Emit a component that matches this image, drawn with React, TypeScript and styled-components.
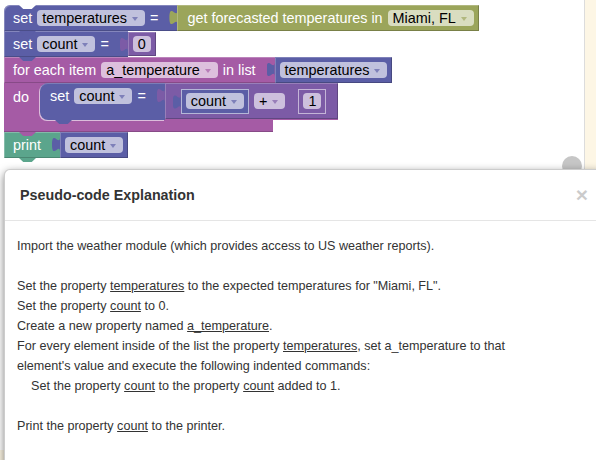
import * as React from "react";
import styled, { createGlobalStyle, css } from "styled-components";

const VAR = "#5b5ea6";
const WEATHER = "#9ba55b";
const LOOP = "#a55ba5";
const MATH = "#7c5ba6";
const PRINT = "#5ba58c";

const FONT = `"Liberation Sans", Arial, sans-serif`;

const GlobalStyle = createGlobalStyle`
  html, body {
    margin: 0;
    padding: 0;
    overflow: hidden;
  }
  body {
    background: #fdf6e5;
    font-family: ${FONT};
  }
`;

const Page = styled.div`
  position: relative;
  width: 596px;
  height: 460px;
  overflow: hidden;
`;

const Workspace = styled.div`
  position: relative;
  box-sizing: border-box;
  width: 585px;
  height: 450px;
  padding: 5px 0 0 4px;
  background: #fff;
  border-right: 1px solid #dcdcdc;
`;

const ScrollKnob = styled.div`
  position: absolute;
  left: 562px;
  top: 156px;
  width: 20px;
  height: 20px;
  border-radius: 50%;
  background: #c6c6c6;
`;

const Stack = styled.div`
  display: flex;
  flex-direction: column;
  align-items: flex-start;
`;

const notch = css`
  clip-path: polygon(0 0, 100% 0, 75% 100%, 25% 100%);
`;

const Statement = styled.div<{ $color: string; $first?: boolean; $minH?: number; $column?: boolean }>`
  position: relative;
  display: flex;
  flex-direction: ${(p) => (p.$column ? "column" : "row")};
  align-items: flex-start;
  min-height: ${(p) => p.$minH ?? 26}px;

  &::after {
    content: "";
    position: absolute;
    left: 15px;
    bottom: -4px;
    width: 17px;
    height: 4px;
    background: ${(p) => p.$color};
    ${notch}
    z-index: 2;
  }

  ${(p) =>
    p.$first &&
    css`
      &::before {
        content: "";
        position: absolute;
        left: 15px;
        top: 0;
        width: 17px;
        height: 4px;
        background: #fff;
        ${notch}
        z-index: 2;
      }
    `}
`;

const Head = styled.div<{ $color: string; $round?: boolean; $inner?: boolean }>`
  box-sizing: border-box;
  align-self: stretch;
  display: flex;
  align-items: flex-start;
  gap: 5px;
  padding: 5px 19px 5px ${(p) => (p.$inner ? 10 : 9)}px;
  background: ${(p) => p.$color};
  box-shadow: inset 1px 1px 0 rgba(255, 255, 255, 0.25), inset 0 -1px 0 rgba(0, 0, 0, 0.18);
  border-top-left-radius: ${(p) => (p.$round ? 6 : 0)}px;

  ${(p) =>
    p.$inner &&
    css`
      border-radius: 8px 0 0 8px;
      box-shadow: -1px 1px 0 rgba(255, 255, 255, 0.6), inset 0 1px 0 rgba(255, 255, 255, 0.2);
    `}
`;

const Label = styled.span`
  color: #fff;
  font-size: 14.4px;
  line-height: 16px;
  white-space: nowrap;
`;

const Field = styled.span`
  display: inline-flex;
  align-items: center;
  gap: 5px;
  box-sizing: border-box;
  height: 16px;
  padding: 0 7px 0 5px;
  border-radius: 4px;
  background: rgba(255, 255, 255, 0.62);
  color: #000;
  font-size: 14.4px;
  line-height: 16px;
  white-space: nowrap;
`;

const NumField = styled(Field)`
  width: 18px;
  padding: 0;
  justify-content: center;
`;

const Arrow = styled.span<{ $color: string }>`
  width: 0;
  height: 0;
  margin-top: 1px;
  border-left: 3px solid transparent;
  border-right: 3px solid transparent;
  border-top: 4px solid ${(p) => p.$color};
  opacity: 0.65;
`;

const Value = styled.div<{
  $color: string;
  $h?: number;
  $pad?: string;
  $inline?: boolean;
  $mt?: number;
  $ml?: number;
}>`
  position: relative;
  box-sizing: border-box;
  display: flex;
  align-items: center;
  gap: 5px;
  height: ${(p) => p.$h ?? 26}px;
  margin-top: ${(p) => p.$mt ?? 0}px;
  margin-left: ${(p) => p.$ml ?? 0}px;
  padding: ${(p) => p.$pad ?? "0 5px"};
  background: ${(p) => p.$color};
  box-shadow: inset 1px 1px 0 rgba(255, 255, 255, 0.22), inset -1px -1px 0 rgba(0, 0, 0, 0.22);

  ${(p) =>
    p.$inline &&
    css`
      border: 1px solid rgba(255, 255, 255, 0.55);
      box-shadow: none;
      padding: 0 4px;
    `}

  &::before {
    content: "";
    position: absolute;
    left: ${(p) => (p.$inline ? -9 : -8)}px;
    top: 5px;
    width: 8px;
    height: 15px;
    background: ${(p) => p.$color};
    clip-path: path("M8 0 C8 10 0 -8 0 7.5 C0 23 8 5 8 15 Z");
  }
`;

const HeadRow = styled.div`
  display: flex;
  align-items: flex-start;
`;

const LoopBody = styled.div<{ $color: string }>`
  display: flex;
  background: ${(p) => p.$color};
`;

const Arm = styled.div`
  box-sizing: border-box;
  width: 36px;
  padding: 5px 0 0 9px;
`;

const LoopFoot = styled.div<{ $color: string }>`
  width: 269px;
  height: 12px;
  background: ${(p) => p.$color};
  box-shadow: inset 0 -1px 0 rgba(0, 0, 0, 0.18);
`;

const Modal = styled.div`
  position: absolute;
  left: 4px;
  top: 169px;
  width: 598px;
  height: 330px;
  background: #fff;
  border: 1px solid rgba(0, 0, 0, 0.2);
  border-radius: 6px;
  box-shadow: 0 3px 9px rgba(0, 0, 0, 0.5);
  font-family: ${FONT};
  font-size: 12.6px;
  line-height: 20px;
  color: #333;
`;

const ModalHeader = styled.div`
  display: flex;
  justify-content: space-between;
  align-items: flex-start;
  padding: 15px;
  border-bottom: 1px solid #e5e5e5;
`;

const Title = styled.h4`
  margin: 0;
  font-size: 14.3px;
  font-weight: bold;
  line-height: 20px;
  color: #333;
`;

const Close = styled.span`
  margin-top: -1px;
  font-size: 21px;
  font-weight: bold;
  line-height: 1;
  color: #000;
  opacity: 0.2;
`;

const ModalBody = styled.div`
  padding: 15px 15px 15px 12px;
`;

const Para = styled.p`
  margin: 0 0 20px;
`;

const Indent = styled.span`
  display: block;
  padding-left: 14px;
`;

const Ref = styled.span`
  text-decoration: underline;
`;

export default function App() {
  return (
    <Page>
      <GlobalStyle />
      <Workspace>
        <Stack>
          <Statement $color={VAR} $first>
            <Head $color={VAR} $round>
              <Label>set</Label>
              <Field>
                temperatures
                <Arrow $color={VAR} />
              </Field>
              <Label>=</Label>
            </Head>
            <Value $color={WEATHER} $pad="0 5px 0 10px">
              <Label>get forecasted temperatures in</Label>
              <Field>
                Miami, FL
                <Arrow $color={WEATHER} />
              </Field>
            </Value>
          </Statement>

          <Statement $color={VAR}>
            <Head $color={VAR}>
              <Label>set</Label>
              <Field>
                count
                <Arrow $color={VAR} />
              </Field>
              <Label>=</Label>
            </Head>
            <Value $color={MATH} $h={24} $mt={1}>
              <NumField>0</NumField>
            </Value>
          </Statement>

          <Statement $color={LOOP} $column>
            <HeadRow>
              <Head $color={LOOP}>
                <Label>for each item</Label>
                <Field>
                  a_temperature
                  <Arrow $color={LOOP} />
                </Field>
                <Label>in list</Label>
              </Head>
              <Value $color={VAR}>
                <Field>
                  temperatures
                  <Arrow $color={VAR} />
                </Field>
              </Value>
            </HeadRow>
            <LoopBody $color={LOOP}>
              <Arm>
                <Label>do</Label>
              </Arm>
              <Statement $color={VAR} $minH={37}>
                <Head $color={VAR} $inner>
                  <Label>set</Label>
                  <Field>
                    count
                    <Arrow $color={VAR} />
                  </Field>
                  <Label>=</Label>
                </Head>
                <Value $color={MATH} $h={36} $pad="0 12px 0 16px">
                  <Value $color={VAR} $h={25} $inline>
                    <Field>
                      count
                      <Arrow $color={VAR} />
                    </Field>
                  </Value>
                  <Field>
                    +
                    <Arrow $color={MATH} />
                  </Field>
                  <Value $color={MATH} $h={25} $inline $ml={8}>
                    <NumField>1</NumField>
                  </Value>
                </Value>
              </Statement>
            </LoopBody>
            <LoopFoot $color={LOOP} />
          </Statement>

          <Statement $color={PRINT}>
            <Head $color={PRINT}>
              <Label>print</Label>
            </Head>
            <Value $color={VAR}>
              <Field>
                count
                <Arrow $color={VAR} />
              </Field>
            </Value>
          </Statement>
        </Stack>
        <ScrollKnob />
      </Workspace>

      <Modal>
        <ModalHeader>
          <Title>Pseudo-code Explanation</Title>
          <Close>×</Close>
        </ModalHeader>
        <ModalBody>
          <Para>Import the weather module (which provides access to US weather reports).</Para>
          <Para>
            Set the property <Ref>temperatures</Ref> to the expected temperatures for "Miami, FL".
            <br />
            Set the property <Ref>count</Ref> to 0.
            <br />
            Create a new property named <Ref>a_temperature</Ref>.
            <br />
            For every element inside of the list the property <Ref>temperatures</Ref>, set a_temperature to that
            <br />
            element's value and execute the following indented commands:
            <Indent>
              Set the property <Ref>count</Ref> to the property <Ref>count</Ref> added to 1.
            </Indent>
          </Para>
          <Para>
            Print the property <Ref>count</Ref> to the printer.
          </Para>
        </ModalBody>
      </Modal>
    </Page>
  );
}
